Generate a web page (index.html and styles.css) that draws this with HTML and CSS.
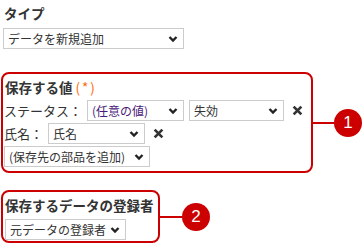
FILE: index.html
```html
<!DOCTYPE html>
<html>
<head>
<meta charset="utf-8">
<title>保存する値</title>
<link rel="stylesheet" href="styles.css">
</head>
<body>
	<div class="page">
		<div class="head">タイプ</div>
		<div class="row">
			<span class="sel w-type"><select><option>データを新規追加</option></select><svg viewBox="0 0 10 8"><path d="M1.5 2 L5 5.5 L8.5 2" /></svg></span>
		</div>

		<div class="callout">
			<div class="box box1">
				<div class="head">保存する値<span class="req">(*)</span></div>
				<div class="row">
					<span class="label">ステータス：</span>
					<span class="sel w-any"><select class="purple"><option>(任意の値)</option></select><svg viewBox="0 0 10 8"><path d="M1.5 2 L5 5.5 L8.5 2" /></svg></span>
					<span class="sel w-val"><select><option>失効</option></select><svg viewBox="0 0 10 8"><path d="M1.5 2 L5 5.5 L8.5 2" /></svg></span>
					<svg class="del" viewBox="0 0 10 10"><path d="M1.5 1.5 L8.5 8.5 M8.5 1.5 L1.5 8.5" /></svg>
				</div>
				<div class="row">
					<span class="label">氏名：</span>
					<span class="sel w-name"><select><option>氏名</option></select><svg viewBox="0 0 10 8"><path d="M1.5 2 L5 5.5 L8.5 2" /></svg></span>
					<svg class="del" viewBox="0 0 10 10"><path d="M1.5 1.5 L8.5 8.5 M8.5 1.5 L1.5 8.5" /></svg>
				</div>
				<div class="row">
					<span class="sel w-add"><select><option>(保存先の部品を追加)</option></select><svg viewBox="0 0 10 8"><path d="M1.5 2 L5 5.5 L8.5 2" /></svg></span>
				</div>
			</div>
			<div class="line l1"></div>
			<div class="badge">1</div>
		</div>

		<div class="callout c2">
			<div class="box box2">
				<div class="head">保存するデータの登録者</div>
				<div class="row">
					<span class="sel w-user"><select><option>元データの登録者</option></select><svg viewBox="0 0 10 8"><path d="M1.5 2 L5 5.5 L8.5 2" /></svg></span>
				</div>
			</div>
			<div class="line l2"></div>
			<div class="badge">2</div>
		</div>
	</div>
</body>
</html>
```

FILE: styles.css
```css
	body {
		margin: 0;
		background: #fff;
		color: #333;
		font-family: "Noto Sans CJK JP", "Noto Sans", sans-serif;
		font-size: 13px;
		line-height: 17px;
	}
	.page {
		padding: 4px 0 0 3px;
	}
	.head {
		font-weight: bold;
		font-size: 13.5px;
		height: 18px;
		line-height: 18px;
		padding-left: 1px;
		white-space: nowrap;
		color: #333;
	}
	.row {
		display: flex;
		align-items: center;
		gap: 5px;
		margin-top: 6px;
	}
	.sel {
		position: relative;
		display: inline-block;
		height: 21px;
	}
	.sel select {
		appearance: none;
		-webkit-appearance: none;
		width: 100%;
		height: 21px;
		margin: 0;
		padding: 0 0 0 4px;
		border: 1px solid #ccc;
		border-radius: 0;
		background: #fff;
		font-family: inherit;
		font-size: 12px;
		color: #333;
		outline: none;
	}
	.sel select.purple {
		color: #4b1a78;
	}
	.sel svg {
		position: absolute;
		right: 6px;
		top: 7px;
		width: 10px;
		height: 8px;
		pointer-events: none;
	}
	.sel svg path {
		fill: none;
		stroke: #222;
		stroke-width: 2.4;
	}
	.w-type { width: 181px; }
	.w-any { width: 97px; }
	.w-val { width: 95px; }
	.w-name { width: 97px; }
	.w-add { width: 146px; }
	.w-user { width: 121px; }

	.del {
		width: 11px;
		height: 11px;
		margin-left: 3px;
	}
	.del path {
		stroke: #333;
		stroke-width: 2.4;
	}
	.label {
		display: inline-block;
	}

	.callout {
		display: flex;
		align-items: center;
		margin-top: 23px;
		margin-left: -2px;
	}
	.callout.c2 {
		margin-top: 17px;
	}
	.box {
		border: 2px solid #c00;
		border-radius: 8px;
		padding: 4px 0 4px 1px;
		box-sizing: border-box;
	}
	.box1 {
		width: 313px;
		height: 101px;
	}
	.box1 .row:nth-child(2) {
		margin-top: 4px;
	}
	.box1 .row + .row {
		margin-top: 2px;
	}
	.box2 {
		width: 159px;
		height: 53px;
		padding-top: 4px;
	}
	.box2 .row {
		margin-top: 5px;
		padding-left: 1px;
	}
	.line {
		height: 2px;
		background: #c00;
	}
	.l1 { width: 21px; }
	.l2 { width: 22px; }
	.badge {
		width: 28px;
		height: 28px;
		border-radius: 50%;
		background: #c00;
		color: #fff;
		font-family: "Liberation Sans", sans-serif;
		font-size: 17px;
		line-height: 28px;
		text-align: center;
	}
	.req {
		color: #f60;
		font-weight: normal;
		letter-spacing: 2px;
		margin-left: 3px;
	}
```
